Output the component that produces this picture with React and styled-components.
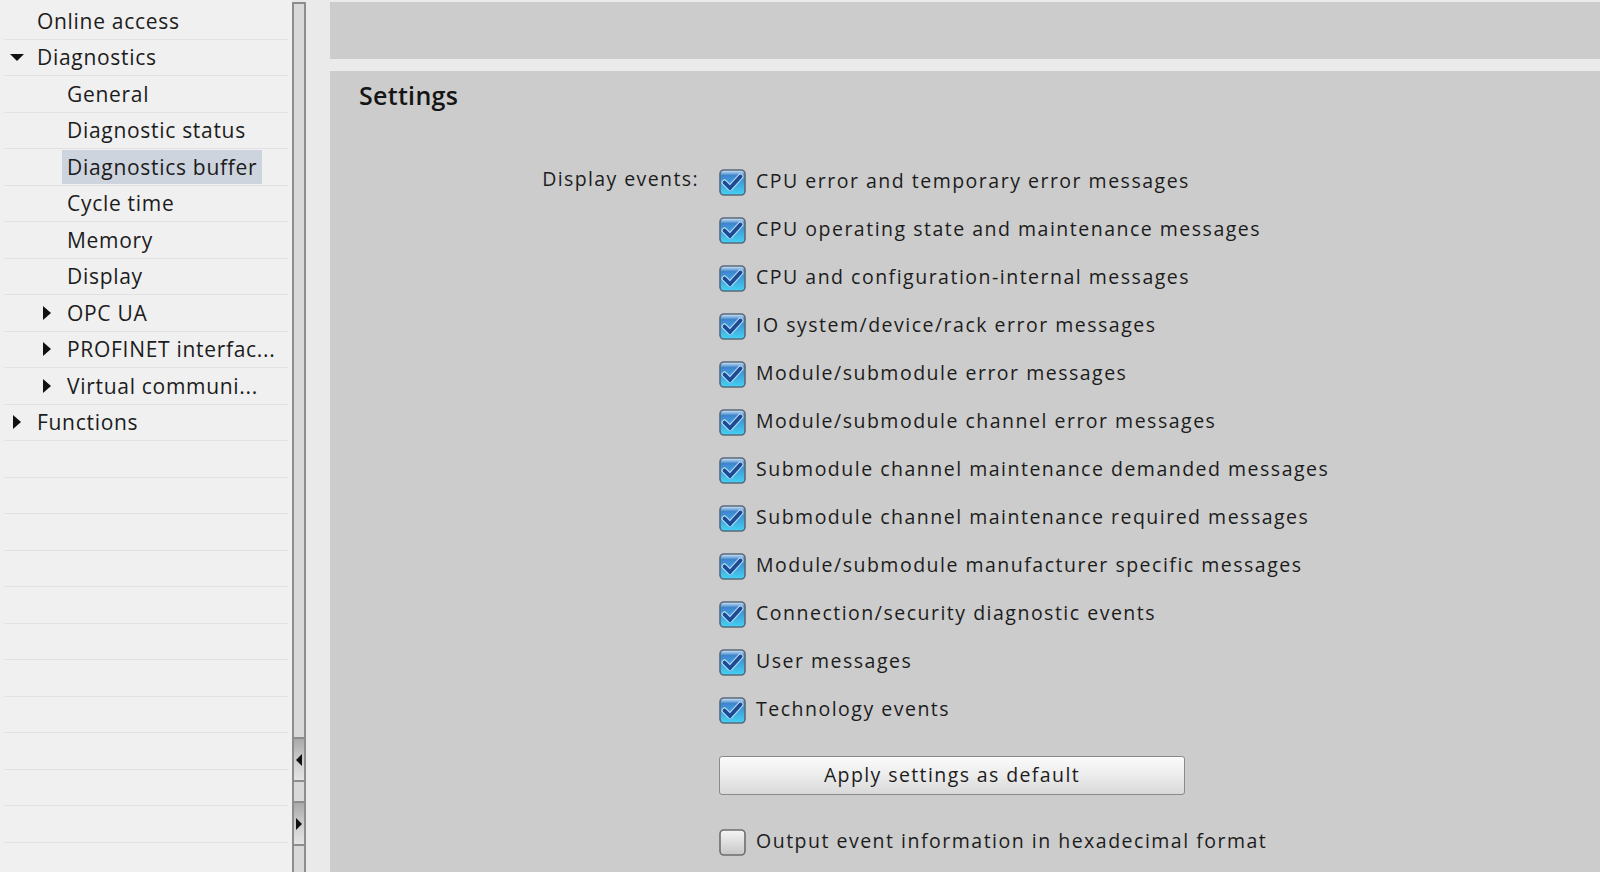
import React from 'react';
import styled, { createGlobalStyle } from 'styled-components';

const GlobalStyle = createGlobalStyle`
  html, body {
    margin: 0;
    padding: 0;
    height: 100%;
    overflow: hidden;
  }
  body {
    font-family: "Open Sans", "DejaVu Sans", sans-serif;
    background: #e9e9e9;
    color: #1c1c1c;
  }
`;

const Page = styled.div`
  display: flex;
  width: 1600px;
  height: 872px;
  background: #e9e9e9;
`;

/* ---------- left tree ---------- */

const Sidebar = styled.div`
  width: 292px;
  flex: none;
  background: #f0f0f0;
  padding-top: 3px;
  box-sizing: border-box;
  overflow: hidden;
`;

const TreeRow = styled.div`
  display: flex;
  align-items: center;
  height: 36.5px;
  box-sizing: border-box;
  margin-left: 4px;
  width: 284px;
  padding-left: ${({ level }) => level * 30}px;
  border-bottom: 1px solid #e2e2e2;
  font-size: 21px;
  letter-spacing: 0.7px;
  white-space: nowrap;
`;

const Toggle = styled.span`
  width: 33px;
  flex: none;
  display: flex;
  align-items: center;
  padding-left: ${({ open }) => (open ? 6 : 9)}px;
  box-sizing: border-box;
`;

const TriDown = styled.span`
  width: 0;
  height: 0;
  border-left: 7px solid transparent;
  border-right: 7px solid transparent;
  border-top: 7px solid #111;
`;

const TriRight = styled.span`
  width: 0;
  height: 0;
  border-top: 7px solid transparent;
  border-bottom: 7px solid transparent;
  border-left: 8px solid #111;
`;

const Label = styled.span`
  padding: 3px 5px;
  margin-left: -5px;
  line-height: 28px;
  background: ${({ selected }) => (selected ? '#cdd4de' : 'transparent')};
`;

/* ---------- splitter ---------- */

const Splitter = styled.div`
  width: 14px;
  flex: none;
  margin-top: 2px;
  box-sizing: border-box;
  display: flex;
  flex-direction: column;
  border: 2px solid #8d8d8d;
  border-bottom: none;
  background: #d9d9d9;
`;

const SplitSpacer = styled.div`
  flex: ${({ grow }) => (grow ? 1 : 'none')};
  height: ${({ h }) => (h ? `${h}px` : 'auto')};
`;

const SplitButton = styled.div`
  height: 45px;
  flex: none;
  display: flex;
  align-items: center;
  justify-content: center;
  border-top: 2px solid #8d8d8d;
  border-bottom: 2px solid #8d8d8d;
  box-sizing: border-box;
  background: linear-gradient(#a9a9a9, #cfcfcf 55%, #e4e4e4);
`;

const SplitArrow = styled.span`
  width: 0;
  height: 0;
  border-top: 6px solid transparent;
  border-bottom: 6px solid transparent;
  ${({ left }) => (left ? 'border-right: 6px solid #111;' : 'border-left: 6px solid #111;')}
`;

const Gutter = styled.div`
  width: 24px;
  flex: none;
  background: #eaeaea;
`;

/* ---------- main area ---------- */

const Main = styled.div`
  flex: 1;
  display: flex;
  flex-direction: column;
  padding-top: 2px;
  gap: 12px;
  background: #ebebeb;
`;

const HeaderPanel = styled.div`
  height: 57px;
  flex: none;
  background: #cccccc;
`;

const SettingsPanel = styled.div`
  flex: 1;
  background: #cccccc;
  padding: 7px 0 0 29px;
`;

const Title = styled.h2`
  margin: 0;
  font-size: 25px;
  font-weight: 600;
  line-height: 34px;
  letter-spacing: 0.3px;
  color: #151515;
`;

const Form = styled.div`
  display: flex;
  gap: 20px;
  margin-top: 46px;
`;

const FormLabel = styled.div`
  width: 340px;
  flex: none;
  text-align: right;
  font-size: 19.5px;
  letter-spacing: 1.4px;
  line-height: 48px;
  height: 48px;
  margin-top: -3px;
`;

const Options = styled.div`
  display: flex;
  flex-direction: column;
`;

const CheckRow = styled.label`
  display: flex;
  align-items: center;
  gap: 10px;
  height: 48px;
  margin-top: ${({ mt }) => mt || 0}px;
  font-size: 19.5px;
  letter-spacing: 1.5px;
  white-space: nowrap;
`;

const CheckText = styled.span`
  position: relative;
  top: -2px;
`;

const Button = styled.button`
  margin-top: 22px;
  width: 466px;
  height: 39px;
  border: 1px solid #8a8a8a;
  border-radius: 3px;
  background: linear-gradient(#fbfbfb, #ececec 50%, #d9d9d9);
  font-family: inherit;
  font-size: 19.5px;
  letter-spacing: 1.4px;
  color: #1c1c1c;
  padding: 0 0 3px;
`;

const Box = ({ checked }) => (
  <svg width="27" height="27" viewBox="0 0 27 27" style={{ flex: 'none' }}>
    <defs>
      <linearGradient id="cbOn" x1="0" y1="0" x2="0" y2="1">
        <stop offset="0" stopColor="#dcecf8" />
        <stop offset="0.22" stopColor="#3d84cd" />
        <stop offset="1" stopColor="#44d2f4" />
      </linearGradient>
      <linearGradient id="cbOff" x1="0" y1="0" x2="0" y2="1">
        <stop offset="0" stopColor="#f6f6f6" />
        <stop offset="1" stopColor="#c6c6c6" />
      </linearGradient>
    </defs>
    <rect x="1" y="1" width="25" height="25" rx="4" fill={checked ? 'url(#cbOn)' : 'url(#cbOff)'} stroke={checked ? '#57697a' : '#6d6d6d'} strokeWidth="1.6" />
    {checked && (
      <>
        <path d="M5.5 13.5 L11 19 L21.5 7.5" fill="none" stroke="#e8f4fc" strokeWidth="6" strokeLinejoin="round" strokeLinecap="round" opacity="0.7" />
        <path d="M5.5 13.5 L11 19 L21.5 7.5" fill="none" stroke="#1c4a93" strokeWidth="3.8" strokeLinejoin="miter" strokeLinecap="round" />
      </>
    )}
  </svg>
);

const tree = [
  { level: 0, text: 'Online access' },
  { level: 0, text: 'Diagnostics', toggle: 'open' },
  { level: 1, text: 'General' },
  { level: 1, text: 'Diagnostic status' },
  { level: 1, text: 'Diagnostics buffer', selected: true },
  { level: 1, text: 'Cycle time' },
  { level: 1, text: 'Memory' },
  { level: 1, text: 'Display' },
  { level: 1, text: 'OPC UA', toggle: 'closed' },
  { level: 1, text: 'PROFINET interfac...', toggle: 'closed' },
  { level: 1, text: 'Virtual communi...', toggle: 'closed' },
  { level: 0, text: 'Functions', toggle: 'closed' },
];

const events = [
  'CPU error and temporary error messages',
  'CPU operating state and maintenance messages',
  'CPU and configuration-internal messages',
  'IO system/device/rack error messages',
  'Module/submodule error messages',
  'Module/submodule channel error messages',
  'Submodule channel maintenance demanded messages',
  'Submodule channel maintenance required messages',
  'Module/submodule manufacturer specific messages',
  'Connection/security diagnostic events',
  'User messages',
  'Technology events',
];

export default function App() {
  const emptyRows = Array.from({ length: 13 });
  return (
    <>
      <GlobalStyle />
      <Page>
        <Sidebar>
          {tree.map((item) => (
            <TreeRow key={item.text} level={item.level}>
              <Toggle open={item.toggle === 'open'}>
                {item.toggle === 'open' && <TriDown />}
                {item.toggle === 'closed' && <TriRight />}
              </Toggle>
              <Label selected={item.selected}>{item.text}</Label>
            </TreeRow>
          ))}
          {emptyRows.map((_, i) => (
            <TreeRow key={i} level={0} />
          ))}
        </Sidebar>
        <Splitter>
          <SplitSpacer grow />
          <SplitButton>
            <SplitArrow left />
          </SplitButton>
          <SplitSpacer h={19} />
          <SplitButton>
            <SplitArrow />
          </SplitButton>
          <SplitSpacer h={26} />
        </Splitter>
        <Gutter />
        <Main>
          <HeaderPanel />
          <SettingsPanel>
            <Title>Settings</Title>
            <Form>
              <FormLabel>Display events:</FormLabel>
              <Options>
                {events.map((e) => (
                  <CheckRow key={e}>
                    <Box checked />
                    <CheckText>{e}</CheckText>
                  </CheckRow>
                ))}
                <Button>Apply settings as default</Button>
                <CheckRow mt={23}>
                  <Box />
                  <CheckText>Output event information in hexadecimal format</CheckText>
                </CheckRow>
              </Options>
            </Form>
          </SettingsPanel>
        </Main>
      </Page>
    </>
  );
}
